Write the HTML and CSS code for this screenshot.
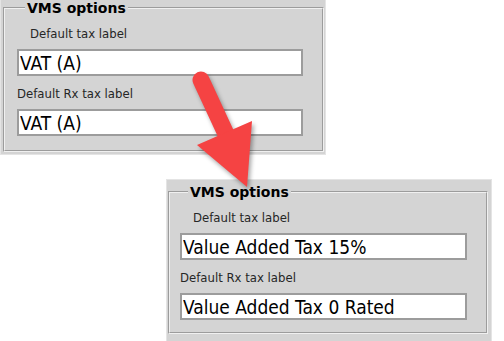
FILE: index.html
```html
<!DOCTYPE html>
<html lang="en">

<head>
  <meta charset="UTF-8">
  <title>VMS options</title>
  <link rel="stylesheet" href="styles.css">
</head>

<body>

  <div class="page">

    <div class="panel panel-before">
      <fieldset>
        <legend>VMS options</legend>
        <label class="indent" for="tax1">Default tax label</label>
        <input type="text" id="tax1" value="VAT (A)" />
        <label for="rx1">Default Rx tax label</label>
        <input type="text" id="rx1" value="VAT (A)" />
      </fieldset>
    </div>

    <div class="panel panel-after">
      <fieldset>
        <legend>VMS options</legend>
        <label class="indent" for="tax2">Default tax label</label>
        <input type="text" id="tax2" value="Value Added Tax 15%" />
        <label for="rx2">Default Rx tax label</label>
        <input type="text" id="rx2" value="Value Added Tax 0 Rated" />
      </fieldset>
    </div>

    <svg class="arrow" width="504" height="341" viewBox="0 0 504 341">
      <line x1="201" y1="80" x2="226" y2="134" stroke="#f54343" stroke-width="17" stroke-linecap="round" />
      <polygon points="197,145 252,121 247,187" fill="#f54343" />
    </svg>

  </div>

</body>

</html>
```

FILE: styles.css
```css
body {
  margin: 0;
  background: #ffffff;
  font-family: 'DejaVu Sans Condensed', 'DejaVu Sans', sans-serif;
}

.page {
  position: relative;
  width: 504px;
  height: 341px;
  overflow: hidden;
}

.panel {
  background: #d4d4d4;
  width: 326px;
  box-sizing: border-box;
  border: 1px solid #e4e4e4;
}

.panel-before {
  margin-top: -1px;
  padding: 0 1px 2px 2px;
}

.panel-after {
  margin: 24px 0 0 166px;
  padding: 4px 3px 10px 1px;
}

fieldset {
  margin: 0;
  border: 2px groove #f0f0f0;
  padding: 0 19px 14px 12px;
}

.panel-after fieldset {
  padding-left: 10px;
  padding-bottom: 12px;
}

legend {
  font-family: 'DejaVu Sans', sans-serif;
  font-weight: bold;
  font-size: 14px;
  line-height: 16px;
  color: #000000;
  margin-left: 8px;
  padding: 0 2px;
}

label {
  display: block;
  margin-top: 10px;
  font-size: 13px;
  line-height: 16px;
  color: #262626;
}

label.indent {
  padding-left: 13px;
}

input {
  display: block;
  width: 100%;
  height: 27px;
  box-sizing: border-box;
  margin: 7px 0 0;
  padding: 0 1px;
  font-family: 'DejaVu Sans Condensed', 'DejaVu Sans', sans-serif;
  font-size: 19px;
  color: #000000;
  background: #ffffff;
  border: 2px solid #9c9c9c;
  outline: none;
}

input + label {
  margin-top: 10px;
}

.arrow {
  position: absolute;
  left: 0;
  top: 0;
  pointer-events: none;
  filter: drop-shadow(2px 3px 2px rgba(0, 0, 0, 0.35));
}
```
